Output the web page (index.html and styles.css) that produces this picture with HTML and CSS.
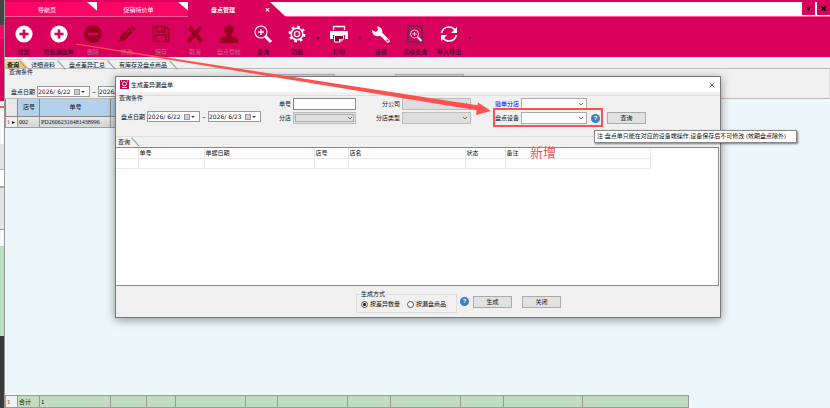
FILE: index.html
```html
<!DOCTYPE html>
<html lang="zh-CN">
<head>
<meta charset="utf-8">
<title>盘点管理</title>
<link rel="stylesheet" href="styles.css">
</head>
<body>
<div class="desktop">
  <div class="behind"></div>
  <main class="window">
    <nav class="tabs">
      <a class="tab" href="#">导航页</a>
      <a class="tab tab-second" href="#">促销特价单</a>
      <a class="tab tab-active" href="#"><span>盘点管理</span><span>✕</span></a>
      <div class="window-buttons">
        <button aria-label="列表"><svg viewBox="0 0 12 12"><path d="M4 5h4L6 8z"/></svg></button>
        <button aria-label="关闭"><svg viewBox="0 0 12 12"><path d="M4 4l4 4M8 4l-4 4" stroke="#000" stroke-width="1.5"/></svg></button>
      </div>
    </nav>

    <div class="toolbar">
      <button class="tool"><svg viewBox="0 0 20 20"><circle cx="10" cy="10" r="8.600" fill="#fff"/><path d="M10 5.500v9M5.500 10h9" stroke="#d8005c" stroke-width="2.600"/></svg>增加</button>
      <button class="tool"><svg viewBox="0 0 20 20"><circle cx="10" cy="10" r="8.600" fill="#fff"/><path d="M10 5.500v9M5.500 10h9" stroke="#d8005c" stroke-width="2.600"/></svg>增加漏盘单</button>
      <button class="tool off"><svg viewBox="0 0 20 20"><circle cx="10" cy="10" r="9" fill="#980020"/><path d="M5 10h10" stroke="#d8005c" stroke-width="2.500"/></svg>删除</button>
      <button class="tool off"><svg viewBox="0 0 20 20"><path d="M2 18l1.500-6L12 4l4 4-8.500 8.500zM13 3l2-1.500 4 3.500-2 2z" fill="#980020"/><path d="M6 13l7-7" stroke="#c4084c" stroke-width="1"/></svg>修改</button>
      <button class="tool off"><svg viewBox="0 0 20 20"><path d="M2.500 2.500h12.500l2.500 2.500v12.500H2.500zM6 3v5h8V3M5 17v-6h10v6M11.500 4v3" fill="none" stroke="#980020" stroke-width="1.500"/></svg>保存</button>
      <button class="tool off"><svg viewBox="0 0 20 20"><path d="M3 5l3-3 4 5 5-5 2 2-4 6 5 6-3 3-5-6-5 6-3-3 5-6z" fill="#980020"/></svg>取消</button>
      <button class="tool off"><svg viewBox="0 0 20 20"><circle cx="10" cy="5.500" r="4.800" fill="#980020"/><path d="M7.500 8h5v4l5 2q2 1 1.500 5H1q-.500-4 1.500-5l5-2z" fill="#980020"/></svg>盘点登帐</button>
      <button class="tool"><svg viewBox="0 0 20 20"><circle cx="8" cy="8" r="6" fill="none" stroke="#fff" stroke-width="1.100"/><path d="M8 5v6M5 8h6" stroke="#fff" stroke-width="1.300"/><path d="M12.500 12.500l5.500 5.500" stroke="#fff" stroke-width="3"/></svg>查询</button>
      <button class="tool"><svg viewBox="0 0 20 20"><circle cx="10" cy="10" r="7.200" fill="none" stroke="#fff" stroke-width="2.400" stroke-dasharray="2.600 3.055"/><circle cx="10" cy="10" r="5.800" fill="none" stroke="#fff" stroke-width="1.500"/><circle cx="10" cy="10" r="2.600" fill="none" stroke="#fff" stroke-width="1.300"/></svg>功能</button>
      <span class="more"></span>
      <button class="tool"><svg viewBox="0 0 20 20"><path d="M4.500 6V2.500h11V6" fill="none" stroke="#fff" stroke-width="1.300"/><path d="M1 7h18v8h-3v-4H4v4H1z" fill="#fff"/><path d="M5.500 11.500h9V15l-3 3h-6z" fill="#900038" stroke="#fff"/><path d="M10 18v-3h4z" fill="#fff"/></svg>打印</button>
      <span class="more"></span>
      <button class="tool"><svg viewBox="0 0 20 20"><path d="M10 10l7 7" stroke="#fff" stroke-width="3.500" stroke-linecap="round"/><path d="M6 2l1 4-2 2-4-2q0 5 4 6 4 1 6-2 2-6-5-8z" fill="#fff"/><circle cx="16.500" cy="16.500" r="1" fill="#d8005c"/></svg>设置</button>
      <button class="tool"><svg viewBox="0 0 20 20"><path d="M3 2h14v16H3z" fill="none" stroke="#553040" stroke-width="1.500"/><circle cx="9.500" cy="10" r="4" fill="none" stroke="#e8c8d4"/><path d="M9.500 8v4M7.500 10h4" stroke="#e8c8d4"/><path d="M12.500 13l4 4" stroke="#fff" stroke-width="2"/></svg>高级查询</button>
      <button class="tool"><svg viewBox="0 0 20 20"><path d="M2.500 9Q4 3 10 3q4 0 6 3M17.500 11Q16 17 10 17q-4 0-6-3" fill="none" stroke="#fff" stroke-width="1.600"/><path d="M18 3v6h-6zM2 17v-6h6z" fill="#fff"/></svg>导入导出</button>
      <span class="more"></span>
    </div>

    <nav class="subtabs">
      <a class="subtab current" href="#">查询</a>
      <a class="subtab" href="#">详细资料</a>
      <a class="subtab" href="#">盘点差异汇总</a>
      <a class="subtab" href="#">有库存没盘点商品</a>
    </nav>

    <section class="filter">
      <div class="filter-top">
        <span>查询条件</span>
        <select disabled aria-label="单号"></select>
        <select disabled aria-label="分店"></select>
      </div>
      <div class="dates">
        <label for="from">盘点日期</label>
        <span class="date"><input id="from" value="2026/ 6/22"><i></i></span>
        <span class="tilde">~</span>
        <span class="date"><input aria-label="结束日期" value="2026/ 6/23"><i></i></span>
      </div>
    </section>

    <section class="main-grid">
      <table class="records">
        <colgroup><col class="c12"><col class="c22"><col class="c71"><col></colgroup>
        <thead><tr><th></th><th>店号</th><th>单号</th><th></th></tr></thead>
        <tbody><tr><td class="mark"><b>1</b> ▸</td><td>002</td><td>PD26062316481438996</td><td></td></tr></tbody>
      </table>
      <table class="totals">
        <colgroup><col class="c12"><col class="c22"><col class="c71"><col class="c36"><col class="c29"><col class="c70"><col class="c32"><col class="c70"><col class="c43"><col class="c70"><col class="c43"><col class="c79"><col></colgroup>
        <tbody><tr><td class="mark"><b>1</b></td><td>合计</td><td>1</td><td></td><td></td><td></td><td></td><td></td><td></td><td></td><td></td><td></td><td></td></tr></tbody>
      </table>
    </section>
  </main>

  <section class="dialog" role="dialog" aria-labelledby="dialog-title">
    <header class="title">
      <svg class="logo" viewBox="0 0 9 9"><path d="M0 0h9v9H0z" fill="#c00850"/><circle cx="4.500" cy="3.800" r="2" fill="none" stroke="#fff"/><path d="M1 1h1M7 1h1M2 7.500h5" stroke="#fff"/></svg>
      <span id="dialog-title">生成差异漏盘单</span>
      <button class="close" aria-label="关闭"><svg viewBox="0 0 6 6"><path d="M.500.500l5 5M5.500.500l-5 5" stroke="#444" stroke-width=".800"/></svg></button>
    </header>
    <div class="query">
      <span class="legend">查询条件</span>
      <div class="dates">
        <label for="d1">盘点日期</label>
        <span class="date"><input id="d1" value="2026/ 6/22"><i></i></span>
        <span class="tilde">~</span>
        <span class="date"><input aria-label="结束日期" value="2026/ 6/23"><i></i></span>
      </div>
      <div class="fields">
        <label for="no">单号</label><input id="no" class="text">
        <label for="company">分公司</label><select id="company" disabled></select>
        <label for="check" class="link">验单分店</label><select id="check"></select>
        <span></span><span></span>
        <label for="shop">分店</label><select id="shop" class="inset" disabled></select>
        <label for="type">分店类型</label><select id="type" disabled></select>
        <label for="device">盘点设备</label><select id="device"></select>
        <span class="help">?</span>
        <button class="btn">查询</button>
      </div>
    </div>
    <nav class="inner-tabs"><a href="#">查询</a></nav>
    <div class="results">
      <table>
        <colgroup><col class="c22"><col class="c66"><col class="c110"><col class="c34"><col class="c117"><col class="c40"><col></colgroup>
        <thead><tr><th></th><th>单号</th><th>单据日期</th><th>店号</th><th>店名</th><th>状态</th><th>备注</th></tr></thead>
        <tbody><tr><td></td><td></td><td></td><td></td><td></td><td></td><td></td></tr></tbody>
      </table>
    </div>
    <footer class="actions">
      <fieldset>
        <legend>生成方式</legend>
        <label><input type="radio" name="mode" checked>按差异数量</label>
        <label><input type="radio" name="mode">按漏盘商品</label>
      </fieldset>
      <span class="help">?</span>
      <button class="btn">生成</button>
      <button class="btn">关闭</button>
    </footer>
  </section>

  <svg class="arrow" width="830" height="408" viewBox="0 0 830 408">
    <path d="M76 43.500L479 105.500L478 110.500L76 44.500z" fill="#ff5050"/>
    <path d="M478 102.500L491 111L476 115z" fill="#ff5050"/>
    <rect x="494" y="109" width="108" height="17" fill="none" stroke="#ff5050" stroke-width="2"/>
  </svg>
  <div class="tooltip" role="tooltip">注:盘点单只能在对应的设备端操作,设备保存后不可修改 (效期盘点除外)</div>
  <span class="note">新增</span>
</div>
</body>
</html>
```
FILE: styles.css
```css
* { box-sizing: border-box; }
body {
  margin: 0;
  font: 6px/8px "Liberation Sans", "Noto Sans CJK SC", sans-serif;
  color: #111;
}
a { color: inherit; text-decoration: none; }
button, input, select { font: inherit; color: inherit; margin: 0; padding: 0; border-radius: 0; }
svg { display: block; }

.desktop { position: relative; display: flex; height: 100vh; overflow: hidden; }
.behind {
  width: 5px;
  border-right: 1px solid #999;
  background: linear-gradient(#444 25px, #ff0566 25px 39px, #d8005c 39px 101px, #f0f0f0 101px 106px, #e55 106px 108px, #f8f8f8 108px 144px, #e4e4e4 144px 169px, #aaa 169px 170px, #fff 170px 186px, #aaa 186px 188px, #e4e4e4 188px 229px, #999 229px 230px, #f8f8f8 230px 246px, #b8dfc0 246px 336px, #3a3a3a 336px);
}
.window { flex: 1; display: flex; flex-direction: column; min-width: 0; background: #f0f0f0; }

.tabs { display: flex; height: 17px; border-top: 2px solid #d8005c; background: #fff; border-bottom: 1px solid #ff5c9c; }
.tab {
  width: 98px;
  padding-right: 14px;
  line-height: 16px;
  text-align: center;
  color: #fff;
  background: #ff0566;
  clip-path: polygon(0 0, 82px 0, 100% 100%, 0 100%);
}
.tab-second { margin-left: -6px; padding-right: 8px; width: 91px; clip-path: polygon(0 0, 81px 0, 100% 60%, 100% 100%, 0 100%); }
.tab-active { display: flex; justify-content: space-between; height: 15px; padding: 0 16px 0 23px; background: #d8005c; font-weight: bold; }
.window-buttons { display: flex; gap: 2px; margin-left: auto; }
.window-buttons button { width: 13px; height: 13px; border: 0; background: #d8005c; }

.toolbar { display: flex; height: 40px; padding-left: 1px; background: #d8005c; }
.tool { width: 34px; padding: 6px 0 0; border: 0; background: none; white-space: nowrap; line-height: 8px; }
.tool:nth-child(-n+2) { width: 35px; }
.tool svg { width: 20px; height: 20px; margin: 0 auto 4px; }
.off { color: #c06a84; }
.more { width: 8px; padding: 20px 0 0 3px; }
.more::before { content: ""; display: block; width: 2px; height: 2px; background: #400018; }

.subtabs { display: flex; height: 12px; padding-top: 2px; border-bottom: 1px solid #bbb; }
.subtab { position: relative; padding: 0 11px 0 3px; line-height: 10px; border-top: 1px solid #ccc; }
.subtab::after { content: ""; position: absolute; right: 4px; top: -1px; width: 1px; height: 12px; background: #999; transform: rotate(-42deg); }
.current { padding: 0 9px 0 2px; font-weight: bold; background: linear-gradient(#ffe0a0, #f6b44c); clip-path: polygon(0 0, 16px 0, 100% 100%, 0 100%); }

.filter { height: 30px; border-bottom: 1px solid #bbb; border-right: 1px solid #ddd; padding-left: 4px; }
.filter-top { display: flex; height: 17px; line-height: 7px; }
.filter-top select { width: 69px; height: 11px; margin: 5px 0 0 60px; }
.filter-top select:nth-child(2) { margin-left: 233px; }
.filter .dates { padding-left: 2px; }
.dates { display: flex; align-items: center; white-space: nowrap; }
.dates label { width: 26px; }
.date { display: flex; align-items: center; width: 53px; height: 11px; padding: 0 3px 0 0; border: 1px solid #999; background: #fff; }
.date input { flex: 1; min-width: 0; width: 20px; border: 0; background: none; outline: 0; font-family: "DejaVu Sans", sans-serif; }
.date i { width: 6px; height: 6px; margin-right: 6px; border: 1px solid #999; background: #ccd; position: relative; }
.date i::after { content: ""; position: absolute; left: 6px; top: 1px; border: 2px solid transparent; border-top-color: #345; }
.tilde { width: 8px; text-align: center; }

select {
  appearance: none;
  height: 12px;
  border: 1px solid #aaa;
  background: #fff url("data:image/svg+xml,%3Csvg xmlns='http://www.w3.org/2000/svg' viewBox='0 0 6 4'%3E%3Cpath d='M1 1l2 2 2-2' fill='none' stroke='%23555' stroke-width='.8'/%3E%3C/svg%3E") no-repeat right 2px center / 6px 4px;
}
select:disabled { background-color: #dedede; border-color: #bbb; opacity: 1; }
.inset { box-shadow: inset 0 0 0 1px #dedede, inset 0 0 0 2px #b0b0b0; }

.main-grid { flex: 1; display: flex; flex-direction: column; justify-content: space-between; background: #edf6f8; }
table { border-collapse: collapse; table-layout: fixed; }
th, td { padding: 0 0 0 1px; overflow: hidden; white-space: nowrap; }
.records { width: 684px; }
.records th { height: 17px; border: 1px solid #888; border-top: 0; background: #b5d0ea; font-weight: normal; text-align: center; }
.records td { height: 11px; border: 1px solid #999; border-top: 0; background: linear-gradient(#e8e8e8, #d4d4d4); font-family: "Liberation Serif", serif; }
.records th:first-child { background: #e8e8e8; }
.records .mark, .totals .mark { background: #f0f0f0; }
.mark b { color: #c47838; }
.totals { width: 684px; }
.totals td { height: 12px; border: 1px solid #999; background: #bfdcc0; }
.c12 { width: 12px; } .c22 { width: 22px; } .c29 { width: 29px; } .c32 { width: 32px; }
.c34 { width: 34px; } .c36 { width: 36px; } .c40 { width: 40px; } .c43 { width: 43px; }
.c66 { width: 66px; } .c70 { width: 70px; } .c71 { width: 71px; } .c79 { width: 79px; }
.c110 { width: 110px; } .c117 { width: 117px; }

.dialog {
  position: absolute;
  left: 115px;
  top: 76px;
  width: 606px;
  border: 1px solid #777;
  background: #f0f0f0;
  box-shadow: 0 2px 9px rgba(0, 0, 0, .4);
}
.title { display: flex; align-items: center; gap: 2px; height: 15px; padding: 0 5px 0 4px; background: #fff; }
.logo { width: 9px; height: 9px; }
.close { width: 6px; height: 6px; margin-left: auto; border: 0; background: none; }
.query { display: grid; grid-template-columns: 160px 1fr; height: 42px; margin-top: 3px; border-top: 1px solid #ddd; border-bottom: 1px solid #ddd; }
.query .legend { grid-column: 1; grid-row: 1; padding-left: 3px; line-height: 4px; }
.query .dates { grid-column: 1; grid-row: 1; align-self: start; padding: 15px 0 0 5px; }
.fields {
  grid-column: 2;
  grid-row: 1;
  display: grid;
  grid-template-columns: 15px 63px 42px 69px 46px 66px 11px 39px;
  grid-template-rows: 12px 12px;
  column-gap: 2px;
  row-gap: 2px;
  align-items: center;
  padding-top: 2px;
  align-content: start;
}
.fields label { text-align: right; white-space: nowrap; }
.text { height: 12px; border: 1px solid #888; background: #fff; min-width: 0; }
.link { color: #00f; }
.help { width: 9px; height: 9px; border-radius: 50%; background: #3f7fc0; color: #fff; font-weight: bold; line-height: 9px; text-align: center; }
.fields .help { justify-self: end; }
.btn { width: 39px; height: 12px; border: 1px solid #aaa; background: #e1e1e1; line-height: 9px; }
.fields .btn { margin-left: 5px; }

.inner-tabs { display: flex; height: 10px; }
.inner-tabs a { position: relative; padding: 0 12px 0 2px; line-height: 11px; }
.inner-tabs a::after { content: ""; position: absolute; right: 6px; top: -1px; width: 1px; height: 12px; background: #999; transform: rotate(-42deg); }
.results { height: 139px; margin-right: 1px; border: 1px solid #888; border-left: 0; background: #fff; }
.results table { width: 535px; }
.results th, .results td { height: 10px; border: 1px solid #e8e8e8; border-top: 0; border-left: 0; font-weight: normal; text-align: left; }
.actions { display: flex; align-items: start; height: 31px; padding: 4px 0 0 240px; }
.actions fieldset { display: flex; gap: 7px; width: 101px; height: 23px; margin: 0; padding: 0 0 0 4px; border: 1px solid #ddd; }
.actions legend { padding: 0 1px; margin-left: -1px; line-height: 8px; }
.actions label { display: flex; align-items: center; gap: 2px; height: 12px; white-space: nowrap; }
.actions input { width: 7px; height: 7px; appearance: none; border: 1px solid #555; border-radius: 50%; background: #fff; }
.actions input:checked { background: radial-gradient(#222 35%, #fff 50%); }
.actions .help { margin: 7px 4px 0 3px; }
.actions .btn { margin: 6px 10px 0 0; }

.arrow { position: absolute; left: 0; top: 0; pointer-events: none; }
.tooltip { position: absolute; left: 594px; top: 130px; width: 203px; height: 13px; padding-left: 2px; border: 1px solid #888; background: #fff; line-height: 11px; white-space: nowrap; box-shadow: 1px 1px 2px rgba(0, 0, 0, .5); }
.note { position: absolute; left: 530px; top: 145px; font-size: 13px; line-height: 16px; color: #ff5050; }
```
